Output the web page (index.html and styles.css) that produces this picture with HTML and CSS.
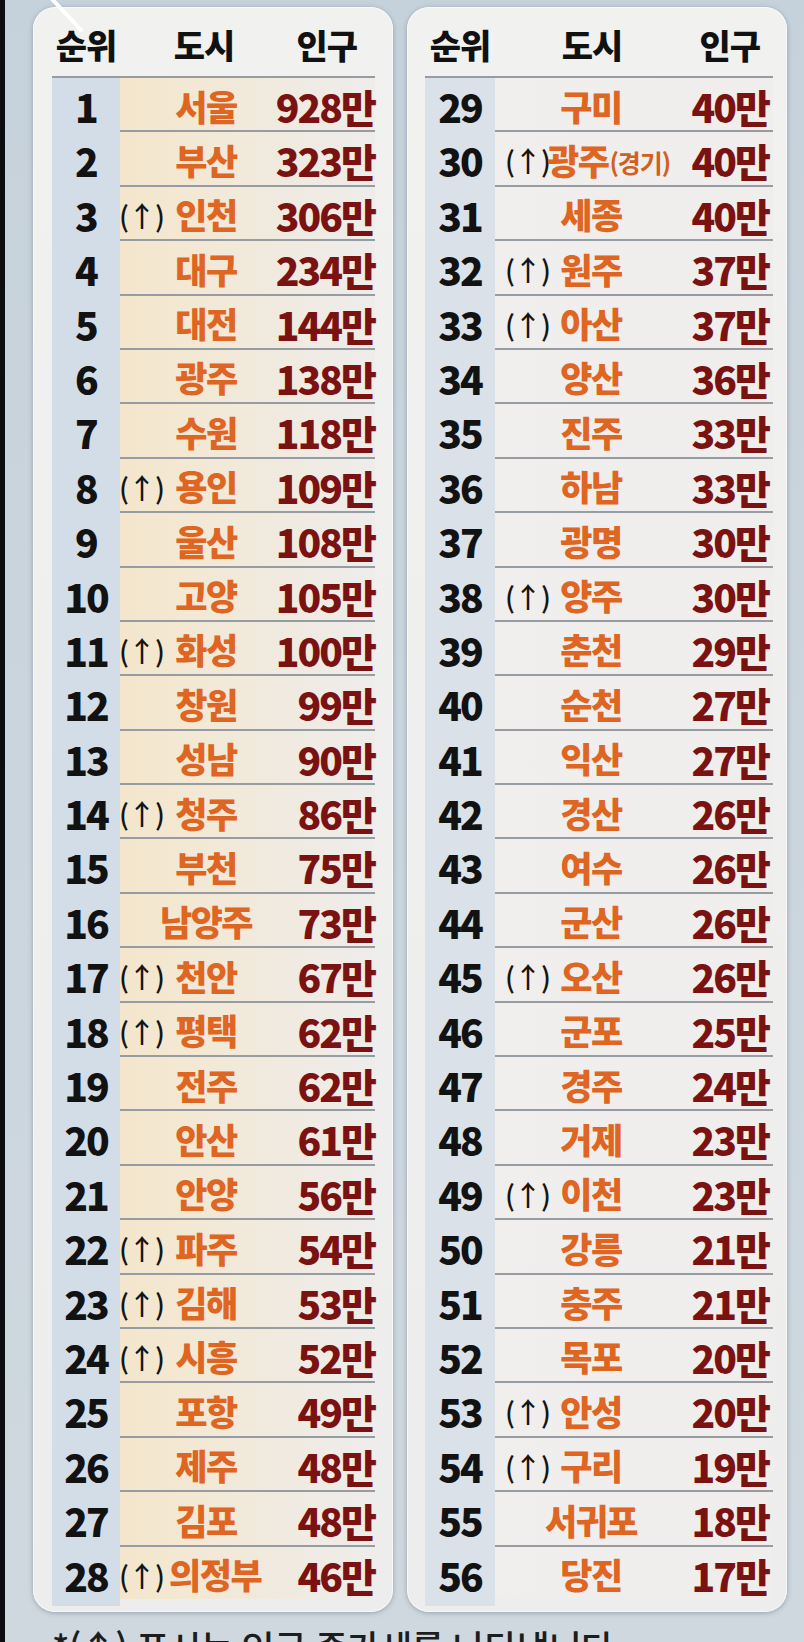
FILE: index.html
```html
<!DOCTYPE html>
<html lang="ko">
<head>
<meta charset="utf-8">
<title>도시 인구 순위</title>
<link rel="stylesheet" href="styles.css">
</head>
<body>
<div class="screen">
  <div class="edge"></div>
  <svg class="stroke" width="40" height="36" viewBox="0 0 40 36"><line x1="2" y1="-2" x2="32" y2="30" stroke="#ffffff" stroke-width="4" stroke-linecap="round"/></svg>
  <div class="boards">
    <div class="card left">
      <div class="head"><span class="h-rank">순위</span><span class="h-city">도시</span><span class="h-pop">인구</span></div>
      <div class="row"><span class="rank">1</span><span class="up"></span><span class="city">서울</span><span class="pop">928만</span></div>
      <div class="row"><span class="rank">2</span><span class="up"></span><span class="city">부산</span><span class="pop">323만</span></div>
      <div class="row"><span class="rank">3</span><span class="up">(↑)</span><span class="city">인천</span><span class="pop">306만</span></div>
      <div class="row"><span class="rank">4</span><span class="up"></span><span class="city">대구</span><span class="pop">234만</span></div>
      <div class="row"><span class="rank">5</span><span class="up"></span><span class="city">대전</span><span class="pop">144만</span></div>
      <div class="row"><span class="rank">6</span><span class="up"></span><span class="city">광주</span><span class="pop">138만</span></div>
      <div class="row"><span class="rank">7</span><span class="up"></span><span class="city">수원</span><span class="pop">118만</span></div>
      <div class="row"><span class="rank">8</span><span class="up">(↑)</span><span class="city">용인</span><span class="pop">109만</span></div>
      <div class="row"><span class="rank">9</span><span class="up"></span><span class="city">울산</span><span class="pop">108만</span></div>
      <div class="row"><span class="rank">10</span><span class="up"></span><span class="city">고양</span><span class="pop">105만</span></div>
      <div class="row"><span class="rank">11</span><span class="up">(↑)</span><span class="city">화성</span><span class="pop">100만</span></div>
      <div class="row"><span class="rank">12</span><span class="up"></span><span class="city">창원</span><span class="pop">99만</span></div>
      <div class="row"><span class="rank">13</span><span class="up"></span><span class="city">성남</span><span class="pop">90만</span></div>
      <div class="row"><span class="rank">14</span><span class="up">(↑)</span><span class="city">청주</span><span class="pop">86만</span></div>
      <div class="row"><span class="rank">15</span><span class="up"></span><span class="city">부천</span><span class="pop">75만</span></div>
      <div class="row"><span class="rank">16</span><span class="up"></span><span class="city">남양주</span><span class="pop">73만</span></div>
      <div class="row"><span class="rank">17</span><span class="up">(↑)</span><span class="city">천안</span><span class="pop">67만</span></div>
      <div class="row"><span class="rank">18</span><span class="up">(↑)</span><span class="city">평택</span><span class="pop">62만</span></div>
      <div class="row"><span class="rank">19</span><span class="up"></span><span class="city">전주</span><span class="pop">62만</span></div>
      <div class="row"><span class="rank">20</span><span class="up"></span><span class="city">안산</span><span class="pop">61만</span></div>
      <div class="row"><span class="rank">21</span><span class="up"></span><span class="city">안양</span><span class="pop">56만</span></div>
      <div class="row"><span class="rank">22</span><span class="up">(↑)</span><span class="city">파주</span><span class="pop">54만</span></div>
      <div class="row"><span class="rank">23</span><span class="up">(↑)</span><span class="city">김해</span><span class="pop">53만</span></div>
      <div class="row"><span class="rank">24</span><span class="up">(↑)</span><span class="city">시흥</span><span class="pop">52만</span></div>
      <div class="row"><span class="rank">25</span><span class="up"></span><span class="city">포항</span><span class="pop">49만</span></div>
      <div class="row"><span class="rank">26</span><span class="up"></span><span class="city">제주</span><span class="pop">48만</span></div>
      <div class="row"><span class="rank">27</span><span class="up"></span><span class="city">김포</span><span class="pop">48만</span></div>
      <div class="row"><span class="rank">28</span><span class="up">(↑)</span><span class="city start">의정부</span><span class="pop">46만</span></div>
    </div>
    <div class="card right">
      <div class="head"><span class="h-rank">순위</span><span class="h-city">도시</span><span class="h-pop">인구</span></div>
      <div class="row"><span class="rank">29</span><span class="up"></span><span class="city">구미</span><span class="pop">40만</span></div>
      <div class="row"><span class="rank">30</span><span class="up">(↑)</span><span class="city start">광주<small>(경기)</small></span><span class="pop">40만</span></div>
      <div class="row"><span class="rank">31</span><span class="up"></span><span class="city">세종</span><span class="pop">40만</span></div>
      <div class="row"><span class="rank">32</span><span class="up">(↑)</span><span class="city">원주</span><span class="pop">37만</span></div>
      <div class="row"><span class="rank">33</span><span class="up">(↑)</span><span class="city">아산</span><span class="pop">37만</span></div>
      <div class="row"><span class="rank">34</span><span class="up"></span><span class="city">양산</span><span class="pop">36만</span></div>
      <div class="row"><span class="rank">35</span><span class="up"></span><span class="city">진주</span><span class="pop">33만</span></div>
      <div class="row"><span class="rank">36</span><span class="up"></span><span class="city">하남</span><span class="pop">33만</span></div>
      <div class="row"><span class="rank">37</span><span class="up"></span><span class="city">광명</span><span class="pop">30만</span></div>
      <div class="row"><span class="rank">38</span><span class="up">(↑)</span><span class="city">양주</span><span class="pop">30만</span></div>
      <div class="row"><span class="rank">39</span><span class="up"></span><span class="city">춘천</span><span class="pop">29만</span></div>
      <div class="row"><span class="rank">40</span><span class="up"></span><span class="city">순천</span><span class="pop">27만</span></div>
      <div class="row"><span class="rank">41</span><span class="up"></span><span class="city">익산</span><span class="pop">27만</span></div>
      <div class="row"><span class="rank">42</span><span class="up"></span><span class="city">경산</span><span class="pop">26만</span></div>
      <div class="row"><span class="rank">43</span><span class="up"></span><span class="city">여수</span><span class="pop">26만</span></div>
      <div class="row"><span class="rank">44</span><span class="up"></span><span class="city">군산</span><span class="pop">26만</span></div>
      <div class="row"><span class="rank">45</span><span class="up">(↑)</span><span class="city">오산</span><span class="pop">26만</span></div>
      <div class="row"><span class="rank">46</span><span class="up"></span><span class="city">군포</span><span class="pop">25만</span></div>
      <div class="row"><span class="rank">47</span><span class="up"></span><span class="city">경주</span><span class="pop">24만</span></div>
      <div class="row"><span class="rank">48</span><span class="up"></span><span class="city">거제</span><span class="pop">23만</span></div>
      <div class="row"><span class="rank">49</span><span class="up">(↑)</span><span class="city">이천</span><span class="pop">23만</span></div>
      <div class="row"><span class="rank">50</span><span class="up"></span><span class="city">강릉</span><span class="pop">21만</span></div>
      <div class="row"><span class="rank">51</span><span class="up"></span><span class="city">충주</span><span class="pop">21만</span></div>
      <div class="row"><span class="rank">52</span><span class="up"></span><span class="city">목포</span><span class="pop">20만</span></div>
      <div class="row"><span class="rank">53</span><span class="up">(↑)</span><span class="city">안성</span><span class="pop">20만</span></div>
      <div class="row"><span class="rank">54</span><span class="up">(↑)</span><span class="city">구리</span><span class="pop">19만</span></div>
      <div class="row"><span class="rank">55</span><span class="up"></span><span class="city">서귀포</span><span class="pop">18만</span></div>
      <div class="row"><span class="rank">56</span><span class="up"></span><span class="city">당진</span><span class="pop">17만</span></div>
    </div>
  </div>
  <p class="note">*(↑) 표시는 인구 증가세를 나타냅니다</p>
</div>
</body>
</html>
```

FILE: styles.css
```css
* { box-sizing: border-box; }

html, body {
  margin: 0;
  padding: 0;
}

body {
  width: 804px;
  height: 1642px;
  overflow: hidden;
  font-family: "Noto Sans CJK KR", "Noto Sans", sans-serif;
  background: linear-gradient(180deg, #c6d2db 0%, #ccd6de 60%, #cfd8df 100%);
}

.screen {
  position: relative;
  height: 1642px;
  padding-top: 7px;
}

.edge {
  position: absolute;
  left: 0;
  top: 0;
  width: 5px;
  height: 100%;
  background: #0c0d10;
}

.stroke {
  position: absolute;
  left: 49px;
  top: 0;
  z-index: 2;
}

.boards {
  display: flex;
  gap: 14px;
  padding-left: 33px;
  align-items: flex-start;
}

.card {
  height: 1605px;
  border-radius: 22px;
  background: linear-gradient(180deg, #f1f1f0 0%, #ecedec 100%);
  box-shadow: 0 1px 5px rgba(40, 60, 80, 0.35), inset 0 0 0 1px rgba(255, 255, 255, 0.6);
  padding-top: 7px;
}

.card.left {
  width: 360px;
  padding-left: 19px;
  padding-right: 18px;
}

.card.right {
  width: 380px;
  padding-left: 18px;
  padding-right: 14px;
}

.head {
  height: 62px;
  display: grid;
  align-items: center;
  font-size: 34px;
  font-weight: 900;
  color: #111;
  letter-spacing: -1px;
  padding-bottom: 2px;
}

.left .head { grid-template-columns: 68px 126px 1fr; }
.right .head { grid-template-columns: 70px 132px 1fr; }

.h-rank, .h-city { text-align: center; }
.left .h-city { padding-left: 42px; }
.right .h-city { padding-left: 62px; }
.h-pop { text-align: right; }
.left .h-pop { padding-right: 18px; }
.right .h-pop { padding-right: 13px; }

.row {
  height: 54.4px;
  display: grid;
  align-items: stretch;
  border-top: 2px solid #979ca2;
}

.left .row {
  grid-template-columns: 68px 46px 80px 1fr;
  background: linear-gradient(90deg, #f4e4c4 0%, #f3e8d3 40%, #f0eae1 75%, #eeedeb 100%);
}

.right .row {
  grid-template-columns: 70px 60px 72px 1fr;
  background: linear-gradient(90deg, #f0efec 0%, #efeeec 100%);
}

.rank {
  display: flex;
  align-items: center;
  justify-content: center;
  font-size: 39px;
  font-weight: 900;
  color: #121212;
  letter-spacing: -2px;
  padding-bottom: 3px;
}

.left .rank { background: #d2dde8; }
.right .rank { background: #dae1e8; }

.up {
  display: flex;
  align-items: center;
  justify-content: flex-end;
  font-size: 28px;
  font-weight: 500;
  color: #151515;
  white-space: nowrap;
  padding-bottom: 3px;
  letter-spacing: -1px;
}

.left .up { padding-right: 2px; }
.right .up { padding-right: 5px; }

.city {
  display: flex;
  align-items: center;
  justify-content: center;
  white-space: nowrap;
  font-size: 35px;
  font-weight: 900;
  color: #de6522;
  letter-spacing: -1.5px;
  padding-bottom: 5px;
}

.city.start { justify-content: flex-start; }
.left .city.start { margin-left: 3px; }
.right .city.start { margin-left: -8px; }

.city small {
  font-size: 25px;
  font-weight: 700;
  color: #d06020;
  letter-spacing: -1px;
  margin-left: 1px;
  padding-top: 5px;
}

.pop {
  display: flex;
  align-items: center;
  justify-content: flex-end;
  white-space: nowrap;
  font-size: 39px;
  font-weight: 900;
  color: #7b1212;
  letter-spacing: -2px;
  padding-bottom: 3px;
}

.left .pop { padding-right: 0; }
.right .pop { padding-right: 4px; }

.note {
  margin: 8px 0 0 52px;
  font-size: 36px;
  font-weight: 500;
  color: #1d1d1d;
  white-space: nowrap;
  letter-spacing: -1px;
}
```
